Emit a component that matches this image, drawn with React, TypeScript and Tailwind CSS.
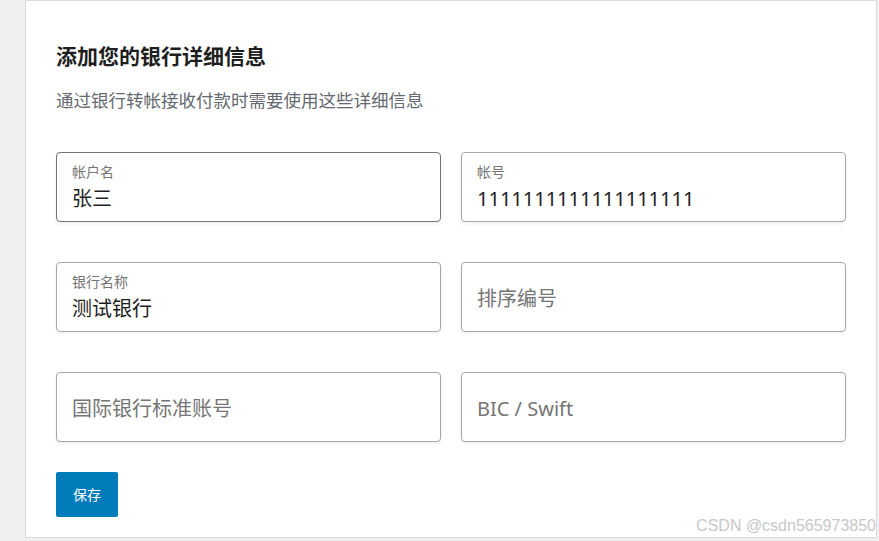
const font = 'font-["Noto_Sans","Noto_Sans_CJK_SC",sans-serif]';

type FieldProps = {
  label: string;
  value?: string;
  focused?: boolean;
};

function Field({ label, value, focused }: FieldProps) {
  const border = focused ? 'border-[#757575]' : 'border-[#a7a7a7]';
  if (value) {
    return (
      <div className={`h-[70px] rounded-[4px] border ${border} bg-white px-[15px] pt-[10px] shadow-[0_2px_4px_rgba(0,0,0,0.06)]`}>
        <div className="text-[14px] leading-[18px] text-[#757575]">{label}</div>
        <div className="mt-[5px] text-[20px] leading-[26px] text-[#1e1e1e]">{value}</div>
      </div>
    );
  }
  return (
    <div className={`flex h-[70px] items-center rounded-[4px] border ${border} bg-white px-[15px] pt-[3px] shadow-[0_2px_4px_rgba(0,0,0,0.06)]`}>
      <div className="text-[20px] leading-[26px] text-[#757575]">{label}</div>
    </div>
  );
}

export default function App() {
  return (
    <div className={`relative h-[541px] w-[879px] overflow-hidden bg-[#f0f0f0] ${font}`}>
      <div className="ml-[25px] h-[538px] w-[852px] border border-[#dcdcdc] bg-white px-[30px] pt-[40px]">
        {/* Header */}
        <h2 className="text-[21px] font-bold leading-[30px] text-[#1e1e1e]">添加您的银行详细信息</h2>
        <p className="mt-[16px] text-[17.5px] leading-[26px] text-[#646970]">通过银行转帐接收付款时需要使用这些详细信息</p>

        {/* Fields */}
        <div className="mt-[39px] grid grid-cols-2 gap-x-[20px] gap-y-[40px]">
          <Field label="帐户名" value="张三" focused />
          <Field label="帐号" value="1111111111111111111" />
          <Field label="银行名称" value="测试银行" />
          <Field label="排序编号" />
          <Field label="国际银行标准账号" />
          <Field label="BIC / Swift" />
        </div>

        <button className="mt-[30px] flex h-[45px] w-[62px] items-center justify-center rounded-[2px] bg-[#007cba] text-[14px] text-white">
          保存
        </button>
      </div>

      <div className='absolute bottom-[6px] right-[3px] font-["Liberation_Sans",sans-serif] text-[16px] leading-[18px] text-[#c8c8c8]'>
        CSDN @csdn565973850
      </div>
    </div>
  );
}
